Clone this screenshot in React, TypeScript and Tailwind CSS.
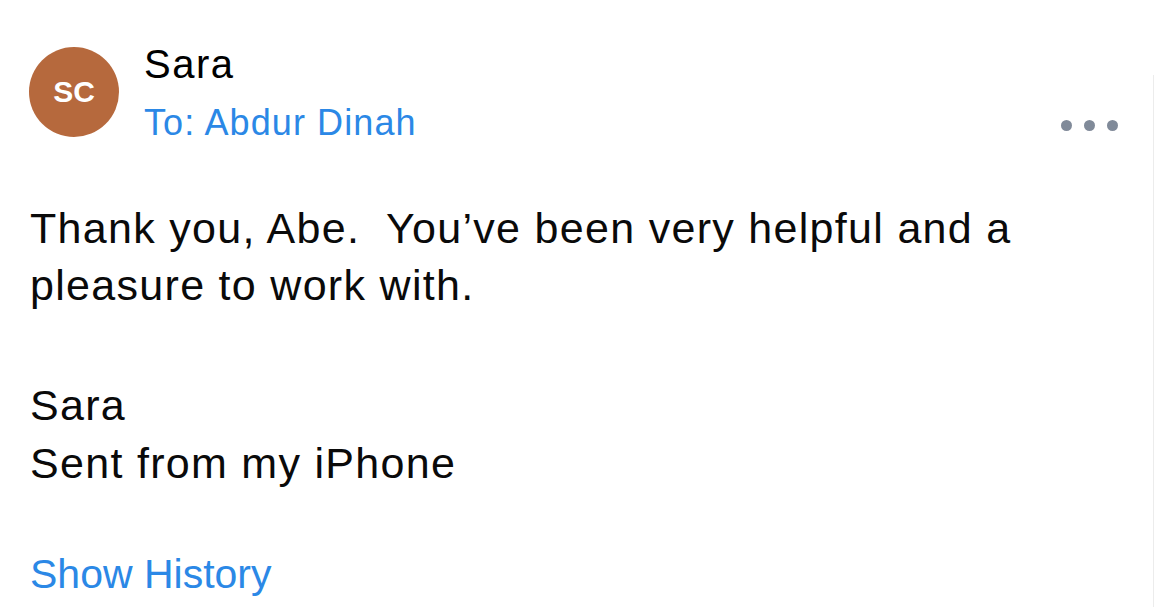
export default function App() {
  return (
    <div className="w-[1154px] h-[607px] bg-white overflow-hidden relative" style={{ fontFamily: '"Liberation Sans", Arial, sans-serif' }}>
      <div className="absolute right-0 top-[75px] bottom-0 w-px bg-[#ececec]" />
      <div className="flex items-start pl-[29px] pr-[30px] pt-[40px]">
        <div className="w-[90px] h-[90px] rounded-full bg-[#b6693d] flex items-center justify-center mt-[7px] shrink-0">
          <span className="text-white font-bold text-[30px] leading-none">SC</span>
        </div>
        <div className="ml-[25px] flex flex-col">
          <span className="text-[40px] leading-[48px] tracking-[1.5px] text-black">Sara</span>
          <span className="text-[36px] leading-[44px] tracking-[1.1px] text-[#2b88e6] mt-[13px]">To: Abdur Dinah</span>
        </div>
        <div className="ml-auto mt-[80px] flex gap-[12px] pr-[6px]">
          <span className="w-[11px] h-[11px] rounded-full bg-[#808a99]" />
          <span className="w-[11px] h-[11px] rounded-full bg-[#808a99]" />
          <span className="w-[11px] h-[11px] rounded-full bg-[#808a99]" />
        </div>
      </div>
      <div className="pl-[30px] mt-[55px] text-[43px] tracking-[1.3px] text-[#0a0a0a]">
        <div className="leading-[57px]">Thank you, Abe.&nbsp; You’ve been very helpful and a</div>
        <div className="leading-[57px]">pleasure to work with.</div>
        <div className="leading-[58px] mt-[62px]">Sara</div>
        <div className="leading-[58px]">Sent from my iPhone</div>
        <div className="leading-[58px] mt-[53px] text-[41px] tracking-normal text-[#2b88e6]">Show History</div>
      </div>
    </div>
  );
}
